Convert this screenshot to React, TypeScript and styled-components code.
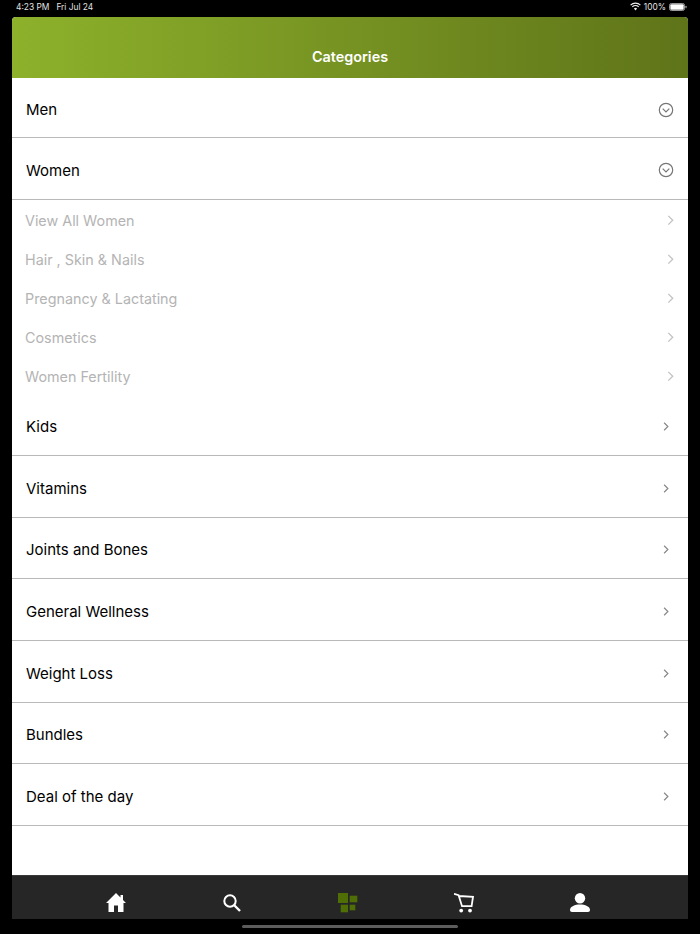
import React from 'react';
import styled, { createGlobalStyle } from 'styled-components';

const GlobalStyle = createGlobalStyle`
    html, body {
        margin: 0;
        padding: 0;
        background: #000;
    }
    * {
        box-sizing: border-box;
    }
`;

const Screen = styled.div`
    width: 700px;
    height: 934px;
    display: flex;
    flex-direction: column;
    background: #000;
    font-family: Inter, 'Liberation Sans', sans-serif;
    overflow: hidden;
`;

const StatusBar = styled.div`
    height: 17px;
    flex: none;
    display: flex;
    justify-content: space-between;
    align-items: center;
    padding: 0 13px 4px 16px;
    color: #e4e4e4;
    font-size: 8.4px;
`;

const StatusGroup = styled.div<{ $gap: number }>`
    display: flex;
    align-items: center;
    gap: ${(p) => p.$gap}px;
`;

const Panel = styled.div`
    flex: 1;
    margin: 0 12px;
    display: flex;
    flex-direction: column;
    background: #fff;
    border-radius: 4px 4px 0 0;
    overflow: hidden;
`;

const Header = styled.div`
    height: 61px;
    flex: none;
    display: flex;
    align-items: flex-end;
    justify-content: center;
    padding-bottom: 13px;
    background: linear-gradient(90deg, #8db12b 0%, #5f7419 100%);
    color: #fff;
    font-size: 14.4px;
    font-weight: 600;
`;

const List = styled.div`
    flex: 1;
    display: flex;
    flex-direction: column;
`;

const Row = styled.div<{ $height: number }>`
    height: ${(p) => p.$height}px;
    flex: none;
    display: flex;
    align-items: center;
    justify-content: space-between;
    padding: 4px 14px 0;
    border-bottom: 1px solid #b9b9b9;
    color: #000;
    font-size: 15px;
`;

const SubList = styled.div`
    height: 194.5px;
    flex: none;
    display: flex;
    flex-direction: column;
`;

const SubRow = styled.div`
    flex: 1;
    display: flex;
    align-items: center;
    justify-content: space-between;
    padding: 3px 14px 0 13px;
    color: #b4b4b4;
    font-size: 14.35px;
`;

const TabBar = styled.div`
    height: 44px;
    flex: none;
    display: grid;
    grid-template-columns: repeat(5, 116px);
    justify-content: center;
    align-items: center;
    padding-right: 4px;
    background: #262626;
    border-top: 1px solid #3a3a3a;
`;

const Tab = styled.div`
    display: flex;
    justify-content: center;
    align-items: center;
    padding-top: 10px;
    height: 100%;
`;

const HomeArea = styled.div`
    height: 15px;
    flex: none;
    display: flex;
    justify-content: center;
    padding-top: 5.5px;
    background: #000;
`;

const HomeIndicator = styled.div`
    width: 216px;
    height: 3px;
    border-radius: 2px;
    background: #5c5c5c;
`;

const ChevronSlot = styled.span`
    width: 16px;
    display: flex;
    justify-content: center;
`;

const ChevronCircle = () => (
    <svg width="16" height="16" viewBox="0 0 16 16" fill="none" stroke="#777">
        <circle cx="8" cy="8" r="6.7" strokeWidth="1.2" />
        <path d="M4.7 6.7 8 10l3.3-3.3" strokeWidth="1.2" />
    </svg>
);

const ChevronRight = ({ color, size }: { color: string; size: number }) => (
    <svg width={size} height={size * 1.5} viewBox="0 0 8 12" fill="none" stroke={color} strokeWidth="1.6">
        <path d="M1.5 1 6.5 6l-5 5" />
    </svg>
);

const WifiIcon = () => (
    <svg width="11" height="9" viewBox="0 0 11 9" fill="none" stroke="#eee" strokeWidth="1.2">
        <path d="M.6 3.1a7 7 0 0 1 9.8 0" />
        <path d="M2.3 4.9a4.6 4.6 0 0 1 6.4 0" />
        <path d="M5.5 8.4 3.9 6.6a2.3 2.3 0 0 1 3.2 0z" fill="#eee" stroke="none" />
    </svg>
);

const BatteryIcon = () => (
    <svg width="18" height="8" viewBox="0 0 18 8">
        <rect x=".5" y=".5" width="15" height="7" rx="1.8" fill="none" stroke="#999" />
        <rect x="1.3" y="1.3" width="13.4" height="5.4" rx="1" fill="#fff" />
        <rect x="16.4" y="2.7" width="1.2" height="2.6" rx=".6" fill="#999" />
    </svg>
);

const HomeIcon = () => (
    <svg width="20" height="19" viewBox="0 0 20 19" fill="#fff" style={{ marginLeft: -1 }}>
        <path d="M10 0l4.5 4.5V2H17v5l3 3h-2.5v9H12v-6.5H8V19H2.5v-9H0z" />
    </svg>
);

const SearchIcon = () => (
    <svg width="18" height="18" viewBox="0 0 18 18" fill="none" stroke="#fff">
        <circle cx="7" cy="7" r="5.7" strokeWidth="2" />
        <path d="M11 11l6 6" strokeWidth="2.4" />
    </svg>
);

const CategoriesIcon = () => (
    <svg width="20" height="20" viewBox="0 0 20 20" fill="#4f6e05">
        <rect x="0" y="0" width="10" height="10" />
        <rect x="11.7" y="2.7" width="7.6" height="6.6" />
        <rect x="2.7" y="11.7" width="7.3" height="7.6" />
        <rect x="11.7" y="11.7" width="5.6" height="5.6" />
    </svg>
);

const CartIcon = () => (
    <svg width="20" height="20" viewBox="0 0 20 20" fill="none" stroke="#fff" strokeWidth="1.8">
        <path d="M0 .8l4.6 1.4L8 13.2h9.6L19 3.8 4.8 3" />
        <circle cx="7.2" cy="17.6" r="1.9" fill="#fff" stroke="none" />
        <circle cx="16" cy="17.6" r="1.9" fill="#fff" stroke="none" />
    </svg>
);

const UserIcon = () => (
    <svg width="20" height="19" viewBox="0 0 20 19" fill="#fff">
        <circle cx="10" cy="5.2" r="5.2" />
        <path d="M0 17c0-3.6 5-5.5 10-5.5s10 1.9 10 5.5c0 1.2-.8 2-2 2H2c-1.2 0-2-.8-2-2z" />
    </svg>
);

const SUB_ITEMS = [
    'View All Women',
    'Hair , Skin & Nails',
    'Pregnancy & Lactating',
    'Cosmetics',
    'Women Fertility',
];

const MAIN_ITEMS = [
    'Kids',
    'Vitamins',
    'Joints and Bones',
    'General Wellness',
    'Weight Loss',
    'Bundles',
    'Deal of the day',
];

export default function App() {
    return (
        <Screen>
            <GlobalStyle />
            <StatusBar>
                <StatusGroup $gap={7}>
                    <span>4:23 PM</span>
                    <span>Fri Jul 24</span>
                </StatusGroup>
                <StatusGroup $gap={3}>
                    <WifiIcon />
                    <span>100%</span>
                    <BatteryIcon />
                </StatusGroup>
            </StatusBar>
            <Panel>
                <Header>Categories</Header>
                <List>
                    <Row $height={60}>
                        Men
                        <ChevronCircle />
                    </Row>
                    <Row $height={61.7}>
                        Women
                        <ChevronCircle />
                    </Row>
                    <SubList>
                        {SUB_ITEMS.map((item) => (
                            <SubRow key={item}>
                                {item}
                                <ChevronRight color="#c4c4c4" size={7} />
                            </SubRow>
                        ))}
                    </SubList>
                    {MAIN_ITEMS.map((item) => (
                        <Row key={item} $height={61.7}>
                            {item}
                            <ChevronSlot>
                                <ChevronRight color="#888" size={6} />
                            </ChevronSlot>
                        </Row>
                    ))}
                </List>
                <TabBar>
                    <Tab>
                        <HomeIcon />
                    </Tab>
                    <Tab>
                        <SearchIcon />
                    </Tab>
                    <Tab>
                        <CategoriesIcon />
                    </Tab>
                    <Tab>
                        <CartIcon />
                    </Tab>
                    <Tab>
                        <UserIcon />
                    </Tab>
                </TabBar>
            </Panel>
            <HomeArea>
                <HomeIndicator />
            </HomeArea>
        </Screen>
    );
}
